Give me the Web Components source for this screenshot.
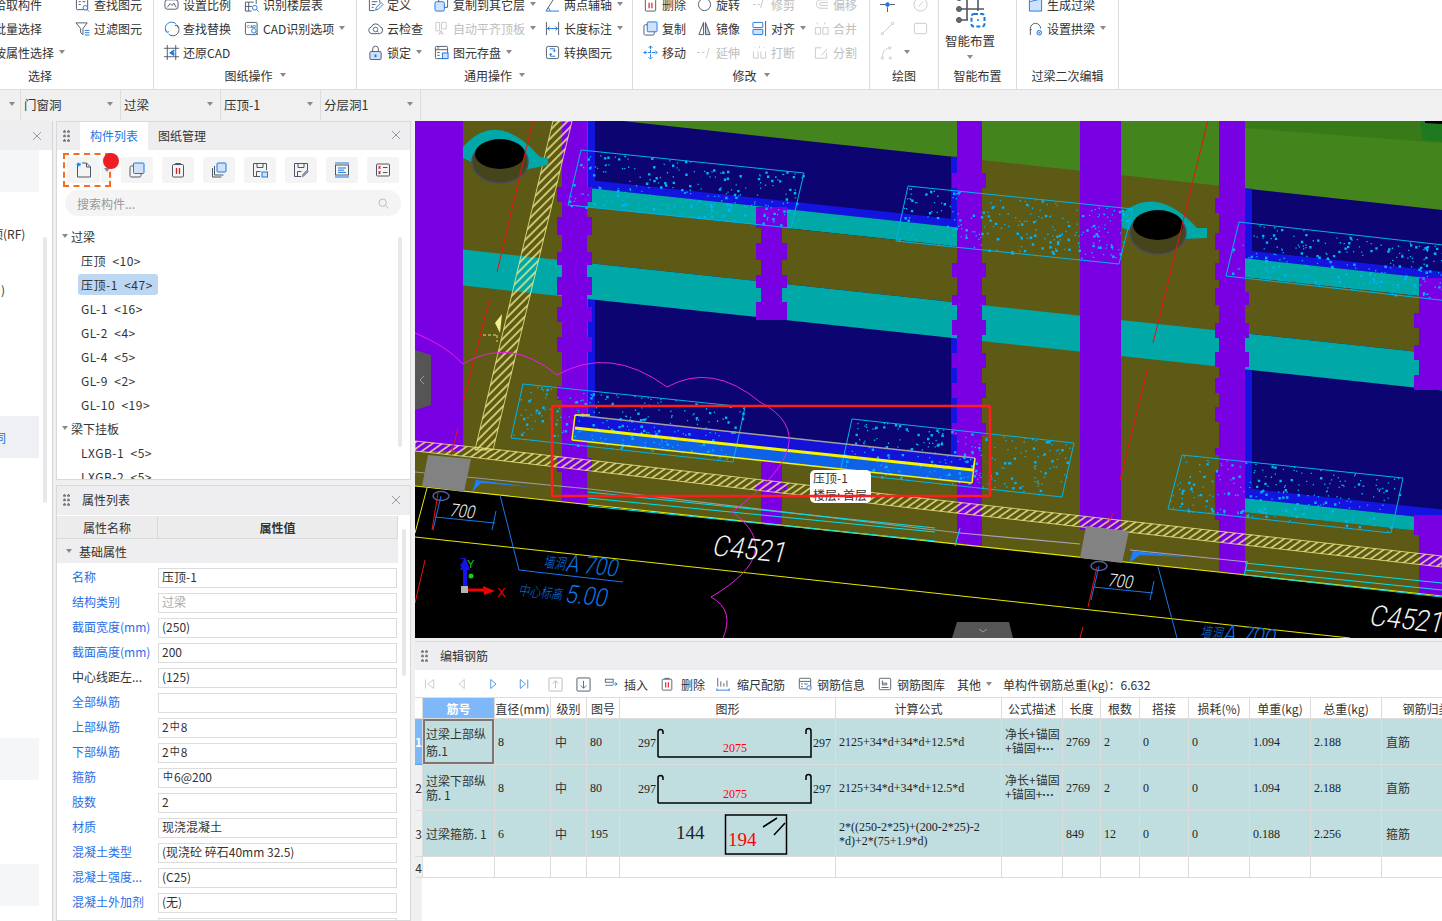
<!DOCTYPE html>
<html lang="zh">
<head>
<meta charset="utf-8">
<title>编辑钢筋</title>
<style>
html, body { margin: 0; padding: 0; height: 921px; overflow: hidden; background: #f0f0f0; }
body { font: 12px "Noto Sans CJK SC", "Noto Sans", sans-serif; color: #333; }
</style>
</head>
<body>
<app-shell></app-shell>
<script>
// icon drawings, 16 unit grid. currentColor is the dark outline, --accent the blue part
const A = 'var(--accent,#1a78e0)';
const L = 'var(--accent-soft,#cfe2fa)';
const ICONS = {
    findel: `<rect x="1.5" y="1.5" width="12" height="12" rx="1"/><path d="M4 5h2M4 8h2M8 5h3"/><circle cx="11" cy="11.5" r="2.4" stroke="${A}" fill="#fff"/><path d="M13 13.5l2 2" stroke="${A}"/>`,
    filter: `<path d="M1 2h12L8.5 8v6.5L6 12.5V8z"/><path d="M10.5 10h5M10.5 12.5h5M10.5 15h5" stroke="${A}"/>`,
    scale: `<rect x="1" y="3" width="14" height="10" rx="2.5"/><path d="M3.5 11l3-4 2 2 2-2.5 2.5 4.5"/>`,
    replace: `<path d="M13 3.5A6.5 6.5 0 0 0 3 12" stroke="${A}"/><path d="M3 12l-1.5-2.5M3 12l2.5-.5" stroke="${A}"/><path d="M5 14a6.5 6.5 0 0 0 9-9.5M14 4.5l-2.5.5M14 4.5l1 2.5"/>`,
    floor: `<path d="M1.5 5.5h9M1.5 10h7M5 5.5V15M1.5 5.5V15H8M7 1.5h6v6"/><circle cx="11.5" cy="11.5" r="2.5" stroke="${A}"/><path d="M13.5 13.5l2 2" stroke="${A}"/>`,
    cadopt: `<rect x="1.5" y="1.5" width="12.5" height="13" rx="1.5"/><text x="3" y="7" font-size="4.6" font-weight="700" fill="${A}" stroke="none" font-family="Liberation Sans">CAD</text><circle cx="10.5" cy="10.5" r="2.4" stroke="${A}" fill="#fff"/><path d="M12.4 12.4l2.6 2.6" stroke="${A}"/>`,
    restore: `<path d="M3.5 0v16M12.5 0v16M0 3.5h16M0 12.5h16"/><path d="M11 5.5L7 8.5l4 2.5M7.5 8.5H11" stroke="${A}" stroke-width="1.8"/>`,
    define: `<path d="M12.5 6V1.5h-11v13H7M4 5h6M4 8h4M4 11h2"/><path d="M8 14l1-3 5-5 2 2-5 5z" stroke="${A}"/>`,
    copylayer: `<rect x="1" y="5" width="10" height="10" rx="1.5" fill="${L}" stroke="${A}"/><path d="M5 5V1.5h9.5V11H11"/>`,
    cloud: `<path d="M4.2 13.5a3.6 3.6 0 0 1-.6-7.1A4.8 4.8 0 0 1 12.6 6a3.8 3.8 0 0 1-.4 7.5z"/><circle cx="8" cy="9" r="2.4" stroke="${A}"/><path d="M9.8 10.8l1.4 1.2" stroke="${A}"/>`,
    autoalign: `<path d="M2 1.5h4v9H2zM8 1.5h5v7H8zM5 15l2.5-5 2.5 5M6 13h3"/>`,
    lock: `<path d="M5 7V4.2a3 3 0 0 1 6 0V7"/><rect x="2" y="7" width="12" height="8.5" rx="1.2" fill="${L}"/><path d="M8 10v3" stroke="${A}" stroke-width="2"/>`,
    save: `<rect x="1.5" y="1.5" width="13" height="13" rx="1"/><path d="M1.5 5h13M3.5 3.2h2M3.5 8h2.5M3.5 11h2.5"/><rect x="9" y="8.5" width="6" height="6" fill="${L}" stroke="${A}"/>`,
    twopoint: `<path d="M1 15L10 1"/><path d="M1 15h14M3.5 11l2 4" stroke="${A}"/>`,
    dim: `<path d="M1.5 1v14M14.5 1v14"/><path d="M2.5 8h11M2.5 8l2.5-2M2.5 8L5 10M13.5 8L11 6M13.5 8L11 10" stroke="${A}"/>`,
    convert: `<rect x="1.5" y="1.5" width="13" height="13" rx="2"/><path d="M5 4h5v3M8.5 5.8L10 7.3l1.5-1.5M11 12H6V9M4.5 10.4L6 9l1.5 1.4" stroke="${A}"/>`,
    del: `<path d="M5.5 2.5v-1h5v1"/><rect x="2.5" y="2.5" width="11" height="12.5" rx="1"/><path d="M6.5 6v6M9.5 6v6" stroke="#e02020" stroke-width="1.3"/>`,
    rotate: `<circle cx="8" cy="8" r="6.5"/>`,
    trim: `<path d="M1 8h3M6 8h3M9 12l3-10"/>`,
    offset: `<path d="M15 3H7a4.5 4.5 0 0 0 0 9h8M15 6H7.5a1.5 1.5 0 0 0 0 3H15"/>`,
    copy: `<rect x="1" y="4" width="11" height="11" rx="1.5"/><rect x="4.5" y="1" width="10.5" height="10.5" rx="1" fill="${L}" stroke="${A}"/>`,
    mirror: `<path d="M7 1.5L2 14.5h5z"/><path d="M9 1.5l5 13H9z" fill="#c5cfdd"/>`,
    align: `<rect x="1" y="1.5" width="10.5" height="5.5" rx=".5" stroke="${A}"/><rect x="1" y="9" width="10.5" height="5.5" rx=".5" fill="${L}" stroke="${A}"/><path d="M14.5 0v16"/>`,
    move: `<path d="M8 1v14M1 8h14M8 1L6 3M8 1l2 2M8 15l-2-2M8 15l2-2M1 8l2-2M1 8l2 2M15 8l-2-2M15 8l-2 2" stroke="${A}" stroke-dasharray="3.4 1"/>`,
    extend: `<path d="M0 8h3M5 8h3M10 14l3-11"/>`,
    breakit: `<path d="M3 2v1M8 1v2M13 2v1M1.5 7v7h5V7M9.5 7v7h5V7"/>`,
    merge: `<path d="M3 1.5l1 2M12 1.5l-1 2M1.5 7H7v7H1.5zM9.5 7H15v7H9.5z"/>`,
    split: `<path d="M8 3H1.5v11h12V8M8 11l6-7"/>`,
    point: `<path d="M0 8h5.5M10.5 8H16M8 11v5"/><circle cx="8" cy="8" r="2" fill="${A}" stroke="${A}"/>`,
    gauge: `<circle cx="8" cy="8" r="7"/><path d="M6 10l5-5"/>`,
    line: `<path d="M3.5 12.5l9-9"/><circle cx="2.5" cy="13.5" r="1.3"/><circle cx="13.5" cy="2.5" r="1.3"/>`,
    rectd: `<rect x="1.5" y="2.5" width="13" height="11" rx="1.5"/>`,
    arc: `<path d="M2.5 13c0-6 4-9.5 7-10"/><circle cx="2.5" cy="14" r="1.2"/><circle cx="10.5" cy="3" r="1.2"/><circle cx="11" cy="14" r="1.2"/>`,
    lintel: `<path d="M1.5 5L14.5 2v13h-13z" fill="${L}" stroke="${A}"/><path d="M1.5 5V1M14.5 2V0" stroke="${A}"/>`,
    archb: `<path d="M2.5 15V8a5.5 5.5 0 0 1 11 0"/><path d="M2 9h2"/><circle cx="12" cy="12.5" r="2.5" fill="${L}" stroke="${A}"/><circle cx="12" cy="12.5" r=".8" fill="${A}" stroke="none"/>`,
    newdoc: `<path d="M1.5 4v11h13V5L10.5 1H6"/><path d="M10.5 1v4h4"/><path d="M1 1l3.5 3M4.5 1L1 4M2.7 .5v4M.5 2.5h4.5" stroke="${A}" stroke-width=".9"/>`,
    copyb: `<path d="M1.5 6v9h9M3.5 4v9h9"/><rect x="6" y="1" width="9" height="9" rx="1" fill="${L}" stroke="${A}"/>`,
    floppya: `<path d="M8 14.5H1.5v-13h13V8M5 1.5v4h6v-4M4.5 14.5v-5h4"/><rect x="10" y="10" width="5.5" height="5" fill="${L}" stroke="${A}"/>`,
    floppyb: `<path d="M8 14.5H1.5v-13h13V8M5 1.5v4h6v-4M4.5 14.5v-5h4"/><path d="M9 15l1-3 4-4 1.5 1.5-4 4z" fill="#8a97a8" stroke="#8a97a8"/>`,
    listb: `<path d="M1 1h14M1 15h14" stroke="${A}"/><rect x="1.5" y="3" width="13" height="10"/><path d="M4 6h8M4 8.2h6M4 10.4h8" stroke="${A}"/>`,
    xlist: `<rect x="1.5" y="2" width="13" height="12" rx="1"/><path d="M3.5 4.5l2 2M5.5 4.5l-2 2M3.5 9.5l2 2M5.5 9.5l-2 2" stroke="#e02020" stroke-width="1.1"/><path d="M8 5.5h4.5M8 10.5h4.5"/>`,
    first: `<path d="M2 2v12M13 2L5 8l8 6z"/>`,
    prev: `<path d="M11 2L4 8l7 6z"/>`,
    next: `<path d="M5 2l7 6-7 6z"/>`,
    last: `<path d="M3 2l7 6-7 6zM13 2v12"/>`,
    upbox: `<rect x="1" y="1" width="14" height="14" rx="1"/><path d="M8 12V4M5 7l3-3 3 3"/>`,
    downbox: `<rect x="1" y="1" width="14" height="14" rx="1"/><path d="M8 4v8M5 9l3 3 3-3" stroke="${A}"/>`,
    insert: `<rect x="1.5" y="2.5" width="9" height="3.5"/><path d="M1.5 9.5h9M10 8h5M13 6l2 2-2 2" stroke="${A}"/>`,
    ruler: `<path d="M1 15h14M1 13v3M15 13v3" stroke="${A}"/><path d="M2 1v10M5.5 5v6M9 7v4M12.5 4v7"/>`,
    info: `<rect x="1.5" y="1.5" width="13" height="12" rx="1"/><path d="M1.5 5h13M3.5 8h2M7 8h4M3.5 11h2"/><circle cx="12.5" cy="12.5" r="2.5" fill="#fff" stroke="${A}"/>`,
    lib: `<rect x="1.5" y="1.5" width="13" height="13" rx="1"/><path d="M4 12h8M5 4v5h5V7H5"/>`,
    search: `<circle cx="7" cy="7" r="4.5"/><path d="M10.5 10.5l3.5 3.5"/>`,
    smart: `<path d="M5 0H30M5 11H30M5 22H14M13 -2V22M24 -2V13" stroke-width="1.6"/><circle cx="5" cy="0" r="2.5" fill="#6b6b6b"/><circle cx="5" cy="11" r="2.5" fill="#6b6b6b"/><circle cx="5" cy="22" r="2.5" fill="#6b6b6b"/><rect x="17.5" y="16" width="13" height="12.5" rx="2.5" stroke="${A}" stroke-width="2" stroke-dasharray="4 2.2"/><circle cx="24" cy="22" r="1" fill="${A}" stroke="none"/>`
};

class UiIcon extends HTMLElement {
    connectedCallback() {
        const size = this.getAttribute('size') || 15;
        const box = this.getAttribute('box') || 16;
        this.attachShadow({ mode: 'open' }).innerHTML = `
            <style>:host { display: inline-flex; flex: none; color: #4d5766; line-height: 0; }</style>
            <svg width="${size}" height="${size}" viewBox="0 0 ${box} ${box}" fill="none" stroke="currentColor" stroke-width="1" overflow="visible">${ICONS[this.getAttribute('name')] || ''}</svg>`;
    }
}
customElements.define('ui-icon', UiIcon);

class UiCaret extends HTMLElement {
    constructor() {
        super();
        this.attachShadow({ mode: 'open' }).innerHTML = `
            <style>:host { display: inline-block; width: 0; height: 0; border: 3.5px solid transparent; border-top: 4px solid #8a8a8a; border-bottom: 0; }</style>`;
    }
}
customElements.define('ui-caret', UiCaret);

class RbItem extends HTMLElement {
    connectedCallback() {
        const off = this.hasAttribute('off');
        const caret = this.hasAttribute('caret') ? '<ui-caret></ui-caret>' : '';
        this.attachShadow({ mode: 'open' }).innerHTML = `
            <style>
                :host { display: flex; align-items: center; height: 24px; white-space: nowrap; color: ${off ? '#bdbdbd' : '#333'}; ${off ? '--accent:#c9c9c9;--accent-soft:#f2f2f2;' : ''} }
                ui-icon { margin-right: 4px; ${off ? 'color:#c9c9c9;' : ''} }
                ui-caret { margin-left: 5px; }
            </style>
            <ui-icon name="${this.getAttribute('icon') || ''}"></ui-icon><slot></slot>${caret}`;
    }
}
customElements.define('rb-item', RbItem);

class RbGroup extends HTMLElement {
    connectedCallback() {
        const caret = this.hasAttribute('caret') ? '<ui-caret></ui-caret>' : '';
        this.attachShadow({ mode: 'open' }).innerHTML = `
            <style>
                :host { display: flex; flex-direction: column; flex: none; height: 97px; box-sizing: border-box; border-right: 1px solid #dcdcdc; width: ${this.getAttribute('w')}px; overflow: hidden; }
                .body { display: grid; height: 72px; grid-auto-flow: column; grid-template-rows: repeat(3, 24px); grid-template-columns: ${this.getAttribute('cols') || '1fr'}; margin-left: ${this.getAttribute('pad') || 0}px; }
                .label { height: 24px; margin-top: -1px; padding-right: ${this.getAttribute('lshift') || 0}px; display: flex; align-items: center; justify-content: center; gap: 7px; }
            </style>
            <div class="body"><slot></slot></div>
            <div class="label"><span>${this.getAttribute('label')}</span>${caret}</div>`;
    }
}
customElements.define('rb-group', RbGroup);

class AppRibbon extends HTMLElement {
    constructor() {
        super();
        this.attachShadow({ mode: 'open' }).innerHTML = `
            <style>
                :host { display: block; height: 89px; background: #fff; overflow: hidden; border-bottom: 1px solid #dcdcdc; }
                .row { display: flex; margin-top: -8px; }
                .big { display: flex; flex-direction: column; align-items: center; width: 62px; height: 72px; padding-top: 6px; box-sizing: border-box; }
                .big span { margin-top: 1px; height: 18px; font-size: 12.5px; }
                .big ui-caret { margin-top: 6px; }
            </style>
            <div class="row">
                <rb-group w="154" pad="-25" cols="100px 79px" label="选择" lshift="73">
                    <rb-item>拾取构件</rb-item><rb-item>批量选择</rb-item><rb-item caret>按属性选择</rb-item>
                    <rb-item icon="findel">查找图元</rb-item><rb-item icon="filter">过滤图元</rb-item>
                </rb-group>
                <rb-group w="203" pad="10" cols="80px 1fr" label="图纸操作" caret>
                    <rb-item icon="scale">设置比例</rb-item><rb-item icon="replace">查找替换</rb-item><rb-item icon="restore">还原CAD</rb-item>
                    <rb-item icon="floor">识别楼层表</rb-item><rb-item icon="cadopt" caret>CAD识别选项</rb-item>
                </rb-group>
                <rb-group w="276" pad="11" cols="66px 111px 1fr" label="通用操作" caret>
                    <rb-item icon="define">定义</rb-item><rb-item icon="cloud">云检查</rb-item><rb-item icon="lock" caret>锁定</rb-item>
                    <rb-item icon="copylayer" caret>复制到其它层</rb-item><rb-item icon="autoalign" off caret>自动平齐顶板</rb-item><rb-item icon="save" caret>图元存盘</rb-item>
                    <rb-item icon="twopoint" caret>两点辅轴</rb-item><rb-item icon="dim" caret>长度标注</rb-item><rb-item icon="convert">转换图元</rb-item>
                </rb-group>
                <rb-group w="237" pad="10" cols="54px 55px 62px 1fr" label="修改" caret>
                    <rb-item icon="del">删除</rb-item><rb-item icon="copy">复制</rb-item><rb-item icon="move">移动</rb-item>
                    <rb-item icon="rotate">旋转</rb-item><rb-item icon="mirror">镜像</rb-item><rb-item icon="extend" off>延伸</rb-item>
                    <rb-item icon="trim" off>修剪</rb-item><rb-item icon="align" caret>对齐</rb-item><rb-item icon="breakit" off>打断</rb-item>
                    <rb-item icon="offset" off>偏移</rb-item><rb-item icon="merge" off>合并</rb-item><rb-item icon="split" off>分割</rb-item>
                </rb-group>
                <rb-group w="69" pad="10" cols="33px 1fr" label="绘图">
                    <rb-item icon="point"></rb-item><rb-item icon="line" off></rb-item><rb-item icon="arc" off caret></rb-item>
                    <rb-item icon="gauge" off></rb-item><rb-item icon="rectd" off></rb-item>
                </rb-group>
                <rb-group w="78" label="智能布置" cols="62px">
                    <div class="big" style="grid-row:1 / 4"><ui-icon name="smart" size="32" box="32"></ui-icon><span>智能布置</span><ui-caret></ui-caret></div>
                </rb-group>
                <rb-group w="102" pad="11" label="过梁二次编辑">
                    <rb-item icon="lintel">生成过梁</rb-item><rb-item icon="archb" caret>设置拱梁</rb-item>
                </rb-group>
            </div>`;
    }
}
customElements.define('app-ribbon', AppRibbon);

class AppSelectors extends HTMLElement {
    connectedCallback() {
        const cells = ['', '门窗洞', '过梁', '压顶-1', '分层洞1'];
        this.attachShadow({ mode: 'open' }).innerHTML = `
            <style>
                :host { display: flex; height: 30px; background: #f0f0f0; }
                .c { width: 100px; box-sizing: border-box; border-right: 1px solid #dcdcdc; display: flex; align-items: center; justify-content: space-between; padding: 0 7px 2px 3px; font-size: 12.5px; }
                .c:first-of-type { width: 21px; padding-right: 5px; }
                .c:first-of-type span { display: none; }
                .c:first-of-type ui-caret { margin-left: auto; }
            </style>
            ${cells.map(t => `<div class="c"><span>${t}</span><ui-caret></ui-caret></div>`).join('')}`;
    }
}
customElements.define('app-selectors', AppSelectors);

// dockable panel: grey title bar with grip, tabs or title, close cross
class DockPanel extends HTMLElement {
    connectedCallback() {
        const closable = !this.hasAttribute('noclose');
        this.attachShadow({ mode: 'open' }).innerHTML = `
            <style>
                :host { display: flex; flex-direction: column; box-sizing: border-box; background: #fff; border: 1px solid #d9d9d9; overflow: hidden; }
                .bar { display: flex; align-items: stretch; height: ${this.getAttribute('bar') || 28}px; flex: none; background: #eeeef0; position: relative; }
                .grip { width: 7px; margin: auto 0 auto 6px; height: 13px; flex: none; background: radial-gradient(circle at 1.5px 1.5px, #777 1.2px, transparent 1.5px) 0 0 / 4px 4.5px; }
                .title { margin-left: 12px; align-self: center; margin-top: -2px; }
                .x { position: absolute; right: 9px; top: 50%; margin-top: -6px; width: 10px; height: 10px; }
                .main { flex: 1; position: relative; min-height: 0; }
            </style>
            <div class="bar">
                <div class="grip"></div>
                <slot name="tabs">${this.getAttribute('heading') ? `<span class="title">${this.getAttribute('heading')}</span>` : ''}</slot>
                ${closable ? '<svg class="x" viewBox="0 0 10 10" stroke="#999" stroke-width="1"><path d="M1 1l8 8M9 1L1 9"/></svg>' : ''}
            </div>
            <div class="main"><slot></slot></div>`;
    }
}
customElements.define('dock-panel', DockPanel);

class FloorPanel extends HTMLElement {
    constructor() {
        super();
        this.attachShadow({ mode: 'open' }).innerHTML = `
            <style>
                :host { display: block; width: 53px; flex: none; box-sizing: border-box; background: #fff; border-right: 1px solid #d5d5d5; overflow: hidden; position: relative; }
                .bar { height: 29px; background: #eeeef0; position: relative; }
                .bar svg { position: absolute; left: 32px; top: 10px; }
                .tint { width: 39px; height: 42px; background: #f5f6f8; overflow: hidden; display: flex; align-items: center; white-space: nowrap; }
                .txt { width: 39px; height: 20px; line-height: 20px; white-space: nowrap; overflow: hidden; }
                .scroll { position: absolute; left: 43px; top: 116px; width: 4px; height: 266px; background: #e8e8e8; border-radius: 2px; }
            </style>
            <div class="bar"><svg width="10" height="10" viewBox="0 0 10 10" stroke="#999"><path d="M1 1l8 8M9 1L1 9"/></svg></div>
            <div class="tint"></div>
            <div class="txt" style="margin-top:32px"><span style="margin-left:-21px">屋顶(RF)</span></div>
            <div class="txt" style="margin-top:36px"><span style="margin-left:1px">)</span></div>
            <div class="tint" style="margin-top:116px;background:#eef0f4;color:#2a6ee8"><span style="margin-left:-6px">同</span></div>
            <div class="tint" style="margin-top:280px"></div>
            <div class="tint" style="margin-top:84px"></div>
            <div class="scroll"></div>`;
    }
}
customElements.define('floor-panel', FloorPanel);

class CompList extends HTMLElement {
    constructor() {
        super();
        const tools = ['copy', 'del', 'copyb', 'floppya', 'floppyb', 'listb', 'xlist'];
        const tree = [
            ['g', '过梁'], ['i', '压顶&nbsp; &lt;10&gt;'], ['s', '压顶-1&nbsp; &lt;47&gt;'], ['i', 'GL-1&nbsp; &lt;16&gt;'], ['i', 'GL-2&nbsp; &lt;4&gt;'],
            ['i', 'GL-4&nbsp; &lt;5&gt;'], ['i', 'GL-9&nbsp; &lt;2&gt;'], ['i', 'GL-10&nbsp; &lt;19&gt;'],
            ['g', '梁下挂板'], ['i', 'LXGB-1&nbsp; &lt;5&gt;'], ['i', 'LXGB-2&nbsp; &lt;5&gt;']
        ];
        this.attachShadow({ mode: 'open' }).innerHTML = `
            <style>
                :host { display: block; height: 100%; position: relative; overflow: hidden; }
                .tools { display: flex; gap: 9px; padding: 7px 0 0 10px; height: 33px; box-sizing: border-box; }
                .t { width: 32px; height: 26px; background: #f4f4f5; border-radius: 3px; display: flex; align-items: center; justify-content: center; }
                .t.first { width: 33px; margin-right: 1px; }
                .t.drop { width: 11px; margin-left: -9px; }
                .search { margin: 7px 0 0 8px; width: 336px; height: 26px; box-sizing: border-box; background: #f4f4f5; border-radius: 13px; color: #999; display: flex; align-items: center; justify-content: space-between; padding: 0 11px 0 12px; }
                .search ui-icon { color: #b0b0b0; }
                .tree { margin-top: 8px; }
                .r { height: 24px; display: flex; align-items: center; white-space: nowrap; }
                .g { padding-left: 5px; }
                .g span { margin-left: 3px; }
                .i { padding-left: 24px; letter-spacing: .5px; }
                .s span { background: #bdd7f2; border-radius: 3px; padding: 2px 5px 2px 3px; margin-left: -3px; }
                .dash { position: absolute; left: 6px; top: 3px; width: 48px; height: 34px; box-sizing: border-box; border: 2.5px dashed #f96b1e; }
                .dot { position: absolute; left: 46px; top: 3px; width: 16px; height: 16px; border-radius: 50%; background: #ee1c25; }
                .scroll { position: absolute; left: 341px; top: 87px; width: 4px; height: 210px; background: #e8e8e8; border-radius: 2px; }
            </style>
            <div class="tools">
                <div class="t first"><ui-icon name="newdoc" size="16"></ui-icon></div>
                <div class="t drop"><ui-caret></ui-caret></div>
                ${tools.map(n => `<div class="t"><ui-icon name="${n}" size="16"></ui-icon></div>`).join('')}
            </div>
            <div class="search"><span>搜索构件...</span><ui-icon name="search" size="13"></ui-icon></div>
            <div class="tree">
                ${tree.map(([k, t]) => k === 'g'
                    ? `<div class="r g"><ui-caret></ui-caret><span>${t}</span></div>`
                    : `<div class="r i ${k === 's' ? 's' : ''}"><span>${t}</span></div>`).join('')}
            </div>
            <div class="dash"></div><div class="dot"></div><div class="scroll"></div>`;
    }
}
customElements.define('comp-list', CompList);

class PropList extends HTMLElement {
    constructor() {
        super();
        const g = '<span class="gd">中</span>';
        const rows = [
            ['名称', '压顶-1'], ['结构类别', '过梁', 'gray'], ['截面宽度(mm)', '(250)'], ['截面高度(mm)', '200'], ['中心线距左...', '(125)', 'black'],
            ['全部纵筋', ''], ['上部纵筋', `2${g}8`], ['下部纵筋', `2${g}8`], ['箍筋', `${g}6@200`], ['肢数', '2'], ['材质', '现浇混凝土'],
            ['混凝土类型', '(现浇砼 碎石40mm 32.5)'], ['混凝土强度...', '(C25)'], ['混凝土外加剂', '(无)'], ['', '']
        ];
        this.attachShadow({ mode: 'open' }).innerHTML = `
            <style>
                :host { display: block; position: relative; }
                .head { display: flex; height: 23px; margin-top: 1px; width: 341px; }
                .head div { background: #ececec; border-right: 1px solid #d9d9d9; border-bottom: 1px solid #d9d9d9; display: flex; align-items: center; justify-content: center; box-sizing: border-box; }
                .head .a { width: 101px; }
                .head .b { width: 240px; font-weight: 700; }
                .sec { height: 24px; width: 341px; background: #eeeef0; display: flex; align-items: center; padding-left: 9px; gap: 7px; box-sizing: border-box; }
                .rows { padding-top: 2px; }
                .row { display: flex; height: 25px; align-items: center; }
                .l { width: 86px; padding-left: 15px; margin-top: -2px; color: #2a6ee8; white-space: nowrap; flex: none; }
                .l.black { color: #333; }
                .v { width: 239px; height: 20px; box-sizing: border-box; border: 1px solid #dcdcdc; padding-left: 3px; line-height: 16px; flex: none; white-space: nowrap; }
                .v.gray { color: #aaa; }
                .gd { font-size: 10px; position: relative; top: -2px; margin: 0 1px; }
                .scroll { position: absolute; left: 345px; top: 13px; width: 4px; height: 147px; background: #e8e8e8; border-radius: 2px; }
            </style>
            <div class="head"><div class="a">属性名称</div><div class="b">属性值</div></div>
            <div class="sec"><ui-caret></ui-caret><span>基础属性</span></div>
            <div class="rows">
                ${rows.map(([l, v, c]) => `<div class="row"><div class="l ${c === 'black' ? 'black' : ''}">${l}</div><div class="v ${c === 'gray' ? 'gray' : ''}">${v}</div></div>`).join('')}
            </div>
            <div class="scroll"></div>`;
    }
}
customElements.define('prop-list', PropList);

// bent bar and stirrup sketches in the shape column
class RebarShape extends HTMLElement {
    connectedCallback() {
        const bar = `
            <path d="M38 38V13q0-2.5 2.5-2.5T43 13v2M38 38H191V12q0-2.5-2.5-2.5T186 12v3" fill="none" stroke="#000" stroke-width="1.5"/>
            <text x="18" y="28" font-size="12" fill="#222" font-family="Liberation Serif">297</text>
            <text x="193" y="28" font-size="12" fill="#222" font-family="Liberation Serif">297</text>
            <text x="103" y="33" font-size="12" fill="#f00" font-family="Liberation Serif">2075</text>`;
        const stirrup = `
            <rect x="105.5" y="4" width="61" height="39" fill="none" stroke="#000" stroke-width="1.5"/>
            <path d="M143 16l14-9M154 24l11-12" stroke="#000" stroke-width="1.5"/>
            <text x="56" y="28" font-size="19" fill="#222" font-family="Liberation Serif">144</text>
            <text x="108" y="35" font-size="19" fill="#f00" font-family="Liberation Serif">194</text>`;
        this.attachShadow({ mode: 'open' }).innerHTML = `
            <style>:host { display: block; width: 216px; height: 46px; }</style>
            <svg width="216" height="46" viewBox="0 0 216 46">${this.getAttribute('kind') === 'bar' ? bar : stirrup}</svg>`;
    }
}
customElements.define('rebar-shape', RebarShape);

class RebarTable extends HTMLElement {
    constructor() {
        super();
        const heads = ['筋号', '直径(mm)', '级别', '图号', '图形', '计算公式', '公式描述', '长度', '根数', '搭接', '损耗(%)', '单重(kg)', '总重(kg)', '钢筋归类'];
        const desc = '净长+锚固<br>+锚固+<span class="dots">···</span>';
        const rows = [
            ['过梁上部纵<br>筋.1', '8', '80', 'bar', '2125+34*d+34*d+12.5*d', desc, '2769', '2', '1.094', '2.188', '直筋'],
            ['过梁下部纵<br>筋. 1', '8', '80', 'bar', '2125+34*d+34*d+12.5*d', desc, '2769', '2', '1.094', '2.188', '直筋'],
            ['过梁箍筋. 1', '6', '195', 'box', '2*((250-2*25)+(200-2*25)-2<br>*d)+2*(75+1.9*d)', '', '849', '12', '0.188', '2.256', '箍筋']
        ];
        const mono = t => `<div class="c m">${t}</div>`;
        this.attachShadow({ mode: 'open' }).innerHTML = `
            <style>
                :host { display: block; height: 100%; background: #fff; position: relative; overflow: hidden; }
                .strip { position: absolute; left: 0; top: 0; bottom: 0; width: 7px; background: #f0f0f0; }
                .grid { position: relative; display: grid; grid-template-columns: 8px 72px 56px 36px 33px 216px 166px 61px 38px 39px 49px 61px 61px 71px 90px; grid-template-rows: 21px 46px 46px 46px 21px; width: 1027px; overflow: hidden; border-top: 1px solid #dcdcdc; }
                .c, .h { box-sizing: border-box; border-right: 1px solid #dcdcdc; border-bottom: 1px solid #dcdcdc; display: flex; align-items: center; white-space: nowrap; overflow: hidden; }
                .h { justify-content: center; background: #fff; }
                .h.on { background: #7eb8f8; color: #fff; font-weight: 700; }
                .c { background: #c0dee0; padding-left: 3px; }
                .c > span.t { display: block; line-height: 14px; }
                .m { font: 12px/14px "Liberation Serif", serif; color: #222; }
                .d { background: #fff; }
                .n { background: #f0f0f0; padding: 0; justify-content: center; }
                .n.on { background: #7eb8f8; color: #fff; font-weight: 700; border-bottom-color: #5d9ee8; }
                .first { box-shadow: inset 0 0 0 2px #777; }
                .first > span.t { line-height: 17px; }
                .sh { padding: 0; }
                .cat { padding-left: 4px; }
                .dots { font-family: "Liberation Sans", sans-serif; font-weight: 700; }
            </style>
            <div class="strip"></div>
            <div class="grid">
                <div class="h"></div>
                ${heads.map((h, i) => `<div class="h ${i === 0 ? 'on' : ''}">${h}</div>`).join('')}
                ${rows.map((r, i) => `
                    <div class="c n ${i === 0 ? 'on' : ''}">${i + 1}</div>
                    <div class="c ${i === 0 ? 'first' : ''}"><span class="t">${r[0]}</span></div>
                    ${mono(r[1])}<div class="c" style="padding-left:4px">中</div>${mono(r[2])}
                    <div class="c sh"><rebar-shape kind="${r[3]}"></rebar-shape></div>
                    <div class="c m"><span class="t">${r[4]}</span></div><div class="c"><span class="t">${r[5]}</span></div>
                    ${mono(r[6])}${mono(r[7])}${mono('0')}${mono('0')}${mono(r[8])}${mono(r[9])}
                    <div class="c cat">${r[10]}</div>`).join('')}
                <div class="c n">4</div>
                ${heads.map(() => '<div class="c d"></div>').join('')}
            </div>`;
    }
}
customElements.define('rebar-table', RebarTable);

class RebarBar extends HTMLElement {
    constructor() {
        super();
        const item = (icon, text, ml, gap) => `<span class="b" style="margin-left:${ml}px"><ui-icon name="${icon}" size="14"></ui-icon><span style="margin-left:${gap}px">${text}</span></span>`;
        this.attachShadow({ mode: 'open' }).innerHTML = `
            <style>
                :host { display: flex; align-items: center; height: 27px; box-sizing: border-box; padding-top: 1px; background: #fff; white-space: nowrap; }
                .b { display: inline-flex; align-items: center; }
                ui-icon.off { color: #bbb; }
                ui-icon.on { color: #1a78e0; }
            </style>
            <ui-icon class="off" name="first" size="12" style="margin-left:9px"></ui-icon>
            <ui-icon class="off" name="prev" size="12" style="margin-left:20px"></ui-icon>
            <ui-icon class="on" name="next" size="12" style="margin-left:19px"></ui-icon>
            <ui-icon class="on" name="last" size="12" style="margin-left:19px"></ui-icon>
            <ui-icon class="off" name="upbox" size="15" style="margin-left:18px"></ui-icon>
            <ui-icon name="downbox" size="15" style="margin-left:13px"></ui-icon>
            ${item('insert', '插入', 13, 6)}${item('del', '删除', 12, 7)}${item('ruler', '缩尺配筋', 11, 7)}
            ${item('info', '钢筋信息', 13, 5)}${item('lib', '钢筋图库', 13, 5)}
            <span style="margin-left:12px">其他</span><ui-caret style="margin-left:5px"></ui-caret>
            <span style="margin-left:11px">单构件钢筋总重(kg)：6.632</span>`;
    }
}
customElements.define('rebar-bar', RebarBar);

// the 3D model view, in screen coordinates of the window
class CadView extends HTMLElement {
    constructor() {
        super();
        this.attachShadow({ mode: 'open' }).innerHTML = `
            <style>:host { display: block; height: 517px; background: #000; overflow: hidden; } svg { display: block; }</style>
            <svg width="1027" height="517" viewBox="415 121 1027 517">${this.scene()}</svg>`;
    }

    scene() {
        const k = 0.107;
        const OLIVE = '#5c5a14', NAVY = '#0c0470', BLUE = '#1414e0', TEAL = '#00a8a8', PURPLE = '#7a00e4', CY = '#00b4ff', HATCH = '#f0ea88';
        const ly = (x, y588) => +(y588 + k * (x - 588)).toFixed(1);
        const poly = (pts, fill, extra = '') => `<polygon points="${pts.map(p => p.join(',')).join(' ')}" fill="${fill}" ${extra}/>`;
        const band = (x1, x2, a, b, fill) => poly([[x1, ly(x1, a)], [x2, ly(x2, a)], [x2, ly(x2, b)], [x1, ly(x1, b)]], fill);
        const line = (x1, y1, x2, y2, c, w = 1) => `<line x1="${x1}" y1="${y1}" x2="${x2}" y2="${y2}" stroke="${c}" stroke-width="${w}"/>`;
        const gy = x => +(121 + 0.1085 * (x - 622)).toFixed(1);
        let s = `<defs>
            <pattern id="hatch" width="6" height="6" patternUnits="userSpaceOnUse" patternTransform="rotate(-45)"><line x1="0" y1="1" x2="6" y2="1" stroke="${HATCH}" stroke-width="1.5"/></pattern>
            <pattern id="hatch2" width="5.5" height="5.5" patternUnits="userSpaceOnUse" patternTransform="rotate(-35)"><line x1="0" y1="1" x2="5.5" y2="1" stroke="${HATCH}" stroke-width="1.4"/></pattern>
        </defs>`;
        s += `<rect x="415" y="121" width="1027" height="517" fill="${OLIVE}"/>`;
        s += poly([[622, 121], [1442, 121], [1442, 210]], '#43851c');
        s += poly([[1245, 121], [1442, 121], [1442, 143], [1245, 128]], '#387a18');
        s += poly([[1420, 121], [1442, 121], [1442, 142], [1423, 140]], '#1f7a1f');
        s += poly([[1425, 121], [1442, 121], [1442, 124], [1425, 123]], '#000');
        s += `<rect x="415" y="121" width="48" height="330" fill="${PURPLE}"/>`;
        // rooms
        s += poly([[588, 121], [622, 121], [957, gy(957)], [957, ly(957, 430)], [588, 430]], NAVY);
        s += poly([[1245, gy(1245)], [1442, gy(1442)], [1442, ly(1442, 430)], [1245, ly(1245, 430)]], NAVY);
        s += `<rect x="588" y="121" width="7" height="300" fill="${BLUE}"/><rect x="951" y="${gy(951)}" width="7" height="300" fill="${BLUE}"/><rect x="1245" y="${gy(1245)}" width="7" height="300" fill="${BLUE}"/>`;
        // beams crossing the rooms
        s += band(588, 958, 180, 188, BLUE) + band(588, 958, 188, 207, TEAL) + band(588, 958, 207, 263, OLIVE);
        s += band(1245, 1442, 180, 188, BLUE) + band(1245, 1442, 188, 207, TEAL) + band(1245, 1442, 207, 263, OLIVE);
        s += band(463, 1442, 263, 299, TEAL);
        s += band(588, 958, 418, 428, BLUE) + band(588, 958, 428, 442, TEAL) + band(588, 958, 442, 460, OLIVE);
        s += band(1245, 1442, 418, 428, BLUE) + band(1245, 1442, 428, 442, TEAL) + band(1245, 1442, 442, 470, OLIVE);
        // columns with their notches
        const col = (x1, x2, y1, y2) => `<rect x="${x1}" y="${y1}" width="${x2 - x1}" height="${y2 - y1}" fill="${PURPLE}"/>`;
        s += col(562, 587, 121, 510);
        [[187, 202], [217, 235], [252, 265], [277, 295], [307, 322], [337, 352]].forEach(b => { s += col(557, 592, b[0], b[1]); });
        s += col(557, 562, 386, 400) + col(557, 592, 458, 472);
        s += col(761, 782, 207, 320) + col(761, 782, 445, 530);
        [[207, 228], [243, 260], [275, 288], [302, 320], [445, 455], [483, 490]].forEach(b => { s += col(756, 787, b[0], b[1]); });
        s += col(957, 982, 121, 550);
        [[173, 188], [263, 277], [295, 305], [320, 335], [353, 368], [383, 398], [423, 435]].forEach(b => { s += col(952, 986, b[0], b[1]); });
        s += col(1080, 1121, 121, 530);
        s += col(1219, 1245, 121, 580);
        [[198, 213], [233, 250], [263, 280], [288, 305], [323, 338], [352, 367], [378, 393], [407, 422], [448, 455], [470, 520]].forEach(b => { s += col(1215, 1223, b[0], b[1]); });
        [[292, 305], [323, 338], [352, 367]].forEach(b => { s += col(1245, 1249, b[0], b[1]); });
        s += col(1419, 1442, 278, 390) + col(1419, 1442, 515, 610);
        [[313, 328], [345, 360], [375, 390], [515, 535]].forEach(b => { s += col(1414, 1419, b[0], b[1]); });
        // highlighted beam, drawn before the walls
        s += poly([[575, 428], [973, 470], [972, 483], [572, 440]], '#0e62e8');
        s += poly([[575, 415], [975, 458], [973, 470], [575, 428]], '#1212d8');
        // hatched walls
        const wall = [[415, 441], [492, 449], [920, 498], [1442, 556], [1442, 567], [920, 509], [470, 457], [415, 451]];
        s += poly(wall, 'url(#hatch2)', `stroke="${HATCH}" stroke-width=".8"`);
        s += poly([[553, 121], [572, 121], [493, 450], [475, 450]], 'url(#hatch)', `stroke="${HATCH}" stroke-width=".8"`);
        // lower parts below the building line
        s += poly([[415, 486], [1442, 596], [1442, 638], [415, 638]], '#000');
        s += line(415, 486, 1442, 596, '#e8e800', 1.1) + line(415, 537, 1350, 638, '#e8e800', 1);
        s += line(427, 488, 415, 533, '#e8e800', 1);
        s += line(415, 472, 590, 489, '#9a9a9a', 1.2) + line(590, 489, 960, 533, '#9a9a9a', 1.2) + line(960, 533, 1080, 544, '#b0a0c0', 1.2) + line(1130, 550, 1248, 562, '#b0a0c0', 1.2);
        s += poly([[472, 492], [476, 480], [531, 487], [481, 483]], '#1a80ff') + poly([[1129, 563], [1133, 551], [1188, 557], [1140, 555]], '#1a80ff');
        // cyan wall lines
        [[492, 528], [498, 532], [506, 541]].forEach(v => { s += line(588, v[0], 935, v[1], '#00e0f0', 1); });
        s += line(960, 528, 955, 546, '#00e0f0', 1);
        [[563, 583], [570, 590], [575, 597]].forEach(v => { s += line(1245, v[0], 1442, v[1], '#00e0f0', 1); });
        s += line(1247, 563, 1244, 576, '#00e0f0', 1);
        // openings with the teal arcs
        const hole = (cx, cy) => `
            <ellipse cx="${cx}" cy="${cy + 1}" rx="28" ry="21" fill="#46441a" stroke="#4a4a60" stroke-width="1.5"/>
            <ellipse cx="${cx}" cy="${cy - 7}" rx="25" ry="15" fill="#000"/>`;
        s += `<path d="M463 158V147Q497 108 540 157L548 158V165L500 175L463 158z" fill="${TEAL}"/>` + hole(500, 161);
        s += `<path d="M1122 228V213Q1157 184 1197 228L1207 228V238L1160 240z" fill="${TEAL}"/>` + hole(1158, 232);
        // red axis dashes
        [[533, 120, 497, 272], [490, 297, 463, 403], [458, 428, 451, 455], [438, 493, 432, 530], [425, 560, 415, 603],
         [1208, 120, 1153, 343], [1148, 367, 1120, 480], [1113, 513, 1107, 527], [1097, 567, 1088, 607], [1083, 627, 1080, 638]].forEach(d => { s += line(d[0], d[1], d[2], d[3], '#f01010', 1); });
        // speckled slabs
        let seed = 7;
        const rnd = () => (seed = (seed * 16807) % 2147483647) / 2147483647;
        [[[581, 150], [804, 173], [791, 228], [568, 205]],
         [[908, 186], [1133, 209], [1119, 264], [896, 241]],
         [[1239, 222], [1470, 248], [1458, 302], [1226, 276]],
         [[523, 384], [745, 407], [733, 462], [511, 438]],
         [[852, 419], [1074, 443], [1062, 497], [840, 473]],
         [[1182, 455], [1403, 478], [1391, 533], [1168, 509]]].forEach(q => {
            s += poly(q, 'none', 'stroke="#00b4e8" stroke-width="1"');
            let dots = '';
            for (let i = 0; i < 240; i++) {
                const u = rnd(), v = rnd(), sz = rnd() < 0.3 ? 2.4 : 1.3;
                const x = q[0][0] + u * (q[1][0] - q[0][0]) + v * (q[3][0] - q[0][0]);
                const y = q[0][1] + u * (q[1][1] - q[0][1]) + v * (q[3][1] - q[0][1]);
                dots += `M${x.toFixed(1)} ${y.toFixed(1)}h${sz}v${sz}h-${sz}z`;
            }
            s += `<path d="${dots}" fill="${CY}"/>`;
        });
        // selected beam outline
        s += `<path d="M575 428L973 470" stroke="#f5f500" stroke-width="3"/><path d="M572 440L972 483M575 415L572 440M975 458L972 483M973 470L975 458" stroke="#f5f500" stroke-width="1.5" fill="none"/><path d="M575 415L975 458" stroke="#a0a0a0" stroke-width="1.5"/><path d="M575 415H590" stroke="#f5f500" stroke-width="1.5"/>`;
        // grey columns at the openings
        s += poly([[428, 455], [471, 459], [464, 492], [422, 486]], '#828282') + poly([[1086, 526], [1129, 531], [1122, 563], [1080, 558]], '#828282');
        // revision cloud
        s += `<path d="M415 333Q445 345 463 364Q510 336 557 375Q610 345 667 387Q712 362 760 402Q830 439 732 512Q788 552 711 597Q735 610 723 638" fill="none" stroke="#e61ee6" stroke-width="1"/>`;
        // small arrow near the wall
        s += poly([[495, 323], [502, 314], [500, 333]], '#f0f090') + `<path d="M483 335H497M497 335V342" stroke="#e8e27c" stroke-dasharray="3 2" fill="none"/>`;
        // dimensions and leaders
        const dimAt = (dx, dy) => `
            <ellipse cx="${441 + dx}" cy="${496 + dy}" rx="8" ry="4.5" fill="none" stroke="#50609a" stroke-width="1.5"/>
            <path d="M${441 + dx} ${496 + dy}L${433 + dx} ${530 + dy}M${435 + dx} ${517 + dy}L${495 + dx} ${523 + dy}M${496 + dx} ${511 + dy}L${492 + dx} ${530 + dy}" stroke="#1878e8" stroke-width="1" fill="none"/>
            <text transform="translate(${449 + dx} ${516 + dy}) rotate(6) skewX(-10)" font-family="Roboto" font-weight="300" font-size="18" fill="#fff" textLength="25" lengthAdjust="spacingAndGlyphs">700</text>`;
        s += dimAt(0, 0) + dimAt(658, 70);
        s += `<path d="M500 495L519 570L623 582M1158 567L1177 638" stroke="#1878e8" fill="none"/>`;
        const cadText = (t, x, y, size, w, c) => `<text transform="translate(${x} ${y}) rotate(6.1) skewX(-10)" font-family="Roboto, 'Noto Sans CJK SC', sans-serif" font-weight="300" font-size="${size}" fill="${c}" textLength="${w}" lengthAdjust="spacingAndGlyphs">${t}</text>`;
        const BL = '#0a78e8';
        s += cadText('C4521', 711, 555, 29, 74, '#f2f2f2') + cadText('C4521', 1368, 625, 29, 74, '#f2f2f2');
        s += cadText('墙洞', 543, 567, 15, 22, BL) + cadText('A 700', 565, 571, 24, 52, BL);
        s += cadText('中心标高', 518, 595, 14, 44, BL) + cadText('5.00', 564, 602, 25, 42, BL);
        s += cadText('墙洞', 1200, 637, 15, 22, BL) + cadText('A 700', 1222, 641, 24, 52, BL);
        // axis triad
        s += `<path d="M465 587V566" stroke="#1414f0" stroke-width="4"/><polygon points="465,557 460,570 470,570" fill="#1414f0"/>
            <circle cx="471" cy="576" r="2.5" fill="#10d010"/>
            <path d="M468 590H485" stroke="#f00000" stroke-width="3"/><polygon points="495,591 483,586 484,595" fill="#f00000"/>
            <rect x="461" y="586" width="7" height="7" fill="#b5b5b5"/>
            <text x="497" y="597" font-size="13" fill="#f00000" font-family="Liberation Sans">X</text>
            <text x="460" y="566" font-size="11" fill="#1414f0" font-family="Liberation Sans">Z</text>
            <text x="467" y="568" font-size="11" fill="#10d010" font-family="Liberation Sans">Y</text>`;
        // collapse handles
        s += `<path d="M415 350L431 355V405L415 410z" fill="#555"/><path d="M424 376l-4 4 4 4" stroke="#999" fill="none"/>`;
        s += `<path d="M957 622H1009L1013 638H952z" fill="#555"/><path d="M979 629l4 3 4-3" stroke="#999" fill="none"/>`;
        // tooltip, the selection frame lies over it
        s += `<rect x="810" y="470" width="61" height="33" rx="5" fill="#fff"/>
            <text x="813" y="483" font-size="12" fill="#333" font-family="Noto Sans CJK SC">压顶-1</text>
            <text x="813" y="500" font-size="12" fill="#333" font-family="Noto Sans CJK SC">楼层: 首层</text>`;
        s += `<rect x="552" y="406" width="438" height="90" rx="1" fill="none" stroke="#ff1e1e" stroke-width="2.5"/>`;
        return s;
    }
}
customElements.define('cad-view', CadView);

class AppShell extends HTMLElement {
    constructor() {
        super();
        this.attachShadow({ mode: 'open' }).innerHTML = `
            <style>
                :host { display: flex; flex-direction: column; width: 1442px; height: 921px; overflow: hidden; background: #f0f0f0; }
                .main { display: flex; flex: 1; min-height: 0; padding-top: 1px; }
                .mid { width: 355px; flex: none; margin: 0 3px 0 3px; display: flex; flex-direction: column; gap: 5px; }
                .comp { height: 359px; flex: none; }
                .props { flex: 1; min-height: 0; }
                .right { flex: 1; min-width: 0; margin-left: 1px; display: flex; flex-direction: column; gap: 3px; }
                .rebar { flex: 1; min-height: 0; border-width: 1px 0 0 0; }
                .tabs { display: flex; height: 100%; margin-left: 10px; }
                .tab { display: flex; align-items: center; padding: 0 10px 2px; }
                .tab.on { background: #fff; color: #1a78e0; }
            </style>
            <app-ribbon></app-ribbon>
            <app-selectors></app-selectors>
            <div class="main">
                <floor-panel></floor-panel>
                <div class="mid">
                    <dock-panel class="comp">
                        <div slot="tabs" class="tabs"><div class="tab on">构件列表</div><div class="tab">图纸管理</div></div>
                        <comp-list></comp-list>
                    </dock-panel>
                    <dock-panel class="props" heading="属性列表" bar="29"><prop-list></prop-list></dock-panel>
                </div>
                <div class="right">
                    <cad-view></cad-view>
                    <dock-panel class="rebar" heading="编辑钢筋" noclose>
                        <rebar-bar></rebar-bar>
                        <rebar-table></rebar-table>
                    </dock-panel>
                </div>
            </div>`;
    }
}
customElements.define('app-shell', AppShell);
</script>
</body>
</html>
